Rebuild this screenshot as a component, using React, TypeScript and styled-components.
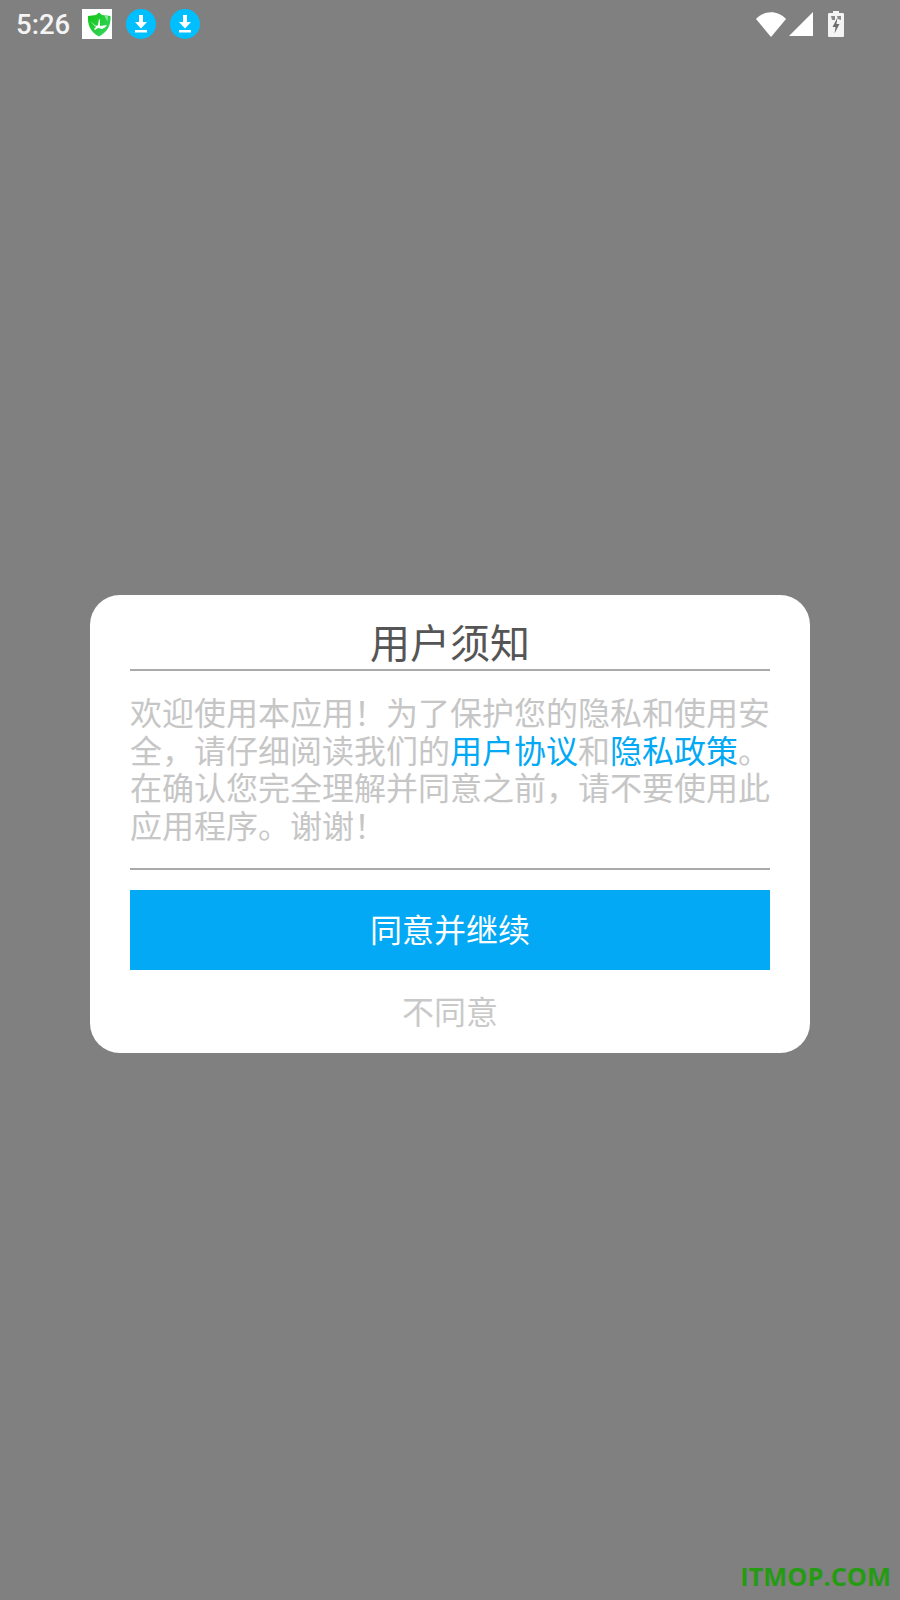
import styled, { createGlobalStyle } from 'styled-components'

const GlobalStyle = createGlobalStyle`
  html, body {
    margin: 0;
    padding: 0;
    background: #808080;
  }
  body {
    font-family: "Noto Sans CJK SC", "Noto Sans", sans-serif;
  }
`

const Screen = styled.div`
  position: relative;
  width: 900px;
  height: 1600px;
  display: flex;
  flex-direction: column;
  background: #808080;
  overflow: hidden;
`

const StatusBar = styled.div`
  height: 48px;
  flex: none;
  display: flex;
  align-items: center;
  justify-content: space-between;
  padding: 0 56px 0 16px;
`

const StatusLeft = styled.div`
  display: flex;
  align-items: center;
`

const StatusRight = styled.div`
  display: flex;
  align-items: center;
`

const Time = styled.span`
  font-family: Roboto, sans-serif;
  font-weight: 500;
  font-size: 27.5px;
  color: #f4f4f4;
  width: 66px;
`

const NotifyTile = styled.div`
  width: 30px;
  height: 30px;
  background: #fff;
  display: flex;
  align-items: center;
  justify-content: flex-end;
  margin-right: 14px;
`

const DownloadBadge = styled.div`
  width: 30px;
  height: 30px;
  border-radius: 50%;
  background: #00bfff;
  display: flex;
  align-items: center;
  justify-content: center;
  margin-right: 14px;
`

const Wifi = styled.svg`
  margin-right: 3px;
`

const Battery = styled.svg`
  margin-left: 15px;
`

const Stage = styled.div`
  flex: 1;
  display: flex;
  align-items: center;
  justify-content: center;
`

const Dialog = styled.div`
  width: 720px;
  height: 458px;
  box-sizing: border-box;
  padding: 0 40px;
  background: #fff;
  border-radius: 30px;
  display: flex;
  flex-direction: column;
`

const Title = styled.div`
  height: 76px;
  line-height: 93px;
  box-sizing: border-box;
  border-bottom: 2px solid #aaa;
  font-size: 40px;
  font-weight: 400;
  color: #555;
  text-align: center;
  white-space: nowrap;
`

const Body = styled.div`
  height: 199px;
  box-sizing: border-box;
  border-bottom: 2px solid #aaa;
  padding-top: 22px;
  font-size: 32px;
  font-weight: 400;
  color: #c6c6c6;
`

const BodyLine = styled.div`
  height: 37.6px;
  line-height: 37.6px;
  white-space: nowrap;
`

const Link = styled.span`
  color: #03a9f4;
`

const AgreeButton = styled.div`
  height: 80px;
  margin-top: 20px;
  flex: none;
  background: #03a9f4;
  color: #fff;
  font-size: 32px;
  font-weight: 400;
  display: flex;
  align-items: center;
  justify-content: center;
  padding-bottom: 4px;
  box-sizing: border-box;
`

const Decline = styled.div`
  flex: 1;
  color: #c9c9c9;
  font-size: 32px;
  font-weight: 400;
  display: flex;
  align-items: center;
  justify-content: center;
  padding-bottom: 3px;
`

const Watermark = styled.div`
  position: absolute;
  right: 9px;
  bottom: 9px;
  font-family: "Open Sans", "Noto Sans", sans-serif;
  font-weight: 700;
  font-size: 25.4px;
  line-height: 30px;
  color: #259b13;
`

function DownloadIcon() {
  return (
    <svg width="20" height="20" viewBox="0 0 20 20" fill="#fff">
      <path d="M8 1h4v7h4L10 14.500 4 8h4z" />
      <rect x="4" y="16" width="12" height="2.500" />
    </svg>
  )
}

function ShieldIcon() {
  return (
    <svg width="25" height="25" viewBox="0 0 25 25">
      <defs>
        <linearGradient id="shield" x1="0" y1="0" x2="1" y2="1">
          <stop offset="0" stopColor="#0fc60f" />
          <stop offset="1" stopColor="#3bd66a" />
        </linearGradient>
      </defs>
      <path d="M12 .5l3 2.500 8.500 1c.5 8-2 15.500-11.500 20.500C3 20 .5 12.500 1 4l8-1z" fill="url(#shield)" />
      <path d="M3 9l6 5 2-1 1-6 1 1 0 6 7-1c-1 2-3 3-5 4l-4-1-3 2-1-1 2-2z" fill="#fff" />
      <path d="M17 3l4 1.500-.5 5z" fill="#8ce8a0" />
    </svg>
  )
}

export default function App() {
  return (
    <Screen>
      <GlobalStyle />
      <StatusBar>
        <StatusLeft>
          <Time>5:26</Time>
          <NotifyTile>
            <ShieldIcon />
          </NotifyTile>
          <DownloadBadge>
            <DownloadIcon />
          </DownloadBadge>
          <DownloadBadge>
            <DownloadIcon />
          </DownloadBadge>
        </StatusLeft>
        <StatusRight>
          <Wifi width="30" height="25" viewBox="0 0 30 25" fill="#fff">
            <path d="M0 7C8-2 22-2 30 7L15 25z" />
          </Wifi>
          <svg width="24" height="24" viewBox="0 0 24 24" fill="#fff">
            <path d="M24 0v24H0z" />
          </svg>
          <Battery width="16" height="26" viewBox="0 0 16 26">
            <path
              d="M5 0h6v2h3.500c1 0 1.500.5 1.500 1.500V24.500c0 1-.5 1.500-1.500 1.500h-13C.5 26 0 25.500 0 24.500V3.500C0 2.500.5 2 1.500 2H5z"
              fill="#f4f4f4"
            />
            <path d="M3 5h4v4H4zM9 5h4v4l-3-1z" fill="#8a8a8a" />
            <path d="M9.500 6.500L4.500 16h3l-1 6.500 5-9.500H8.500z" fill="#6e6e6e" />
          </Battery>
        </StatusRight>
      </StatusBar>
      <Stage>
        <Dialog>
          <Title>用户须知</Title>
          <Body>
            <BodyLine>欢迎使用本应用！为了保护您的隐私和使用安</BodyLine>
            <BodyLine>
              全，请仔细阅读我们的<Link>用户协议</Link>和<Link>隐私政策</Link>。
            </BodyLine>
            <BodyLine>在确认您完全理解并同意之前，请不要使用此</BodyLine>
            <BodyLine>应用程序。谢谢！</BodyLine>
          </Body>
          <AgreeButton>同意并继续</AgreeButton>
          <Decline>不同意</Decline>
        </Dialog>
      </Stage>
      <Watermark>ITMOP.COM</Watermark>
    </Screen>
  )
}
